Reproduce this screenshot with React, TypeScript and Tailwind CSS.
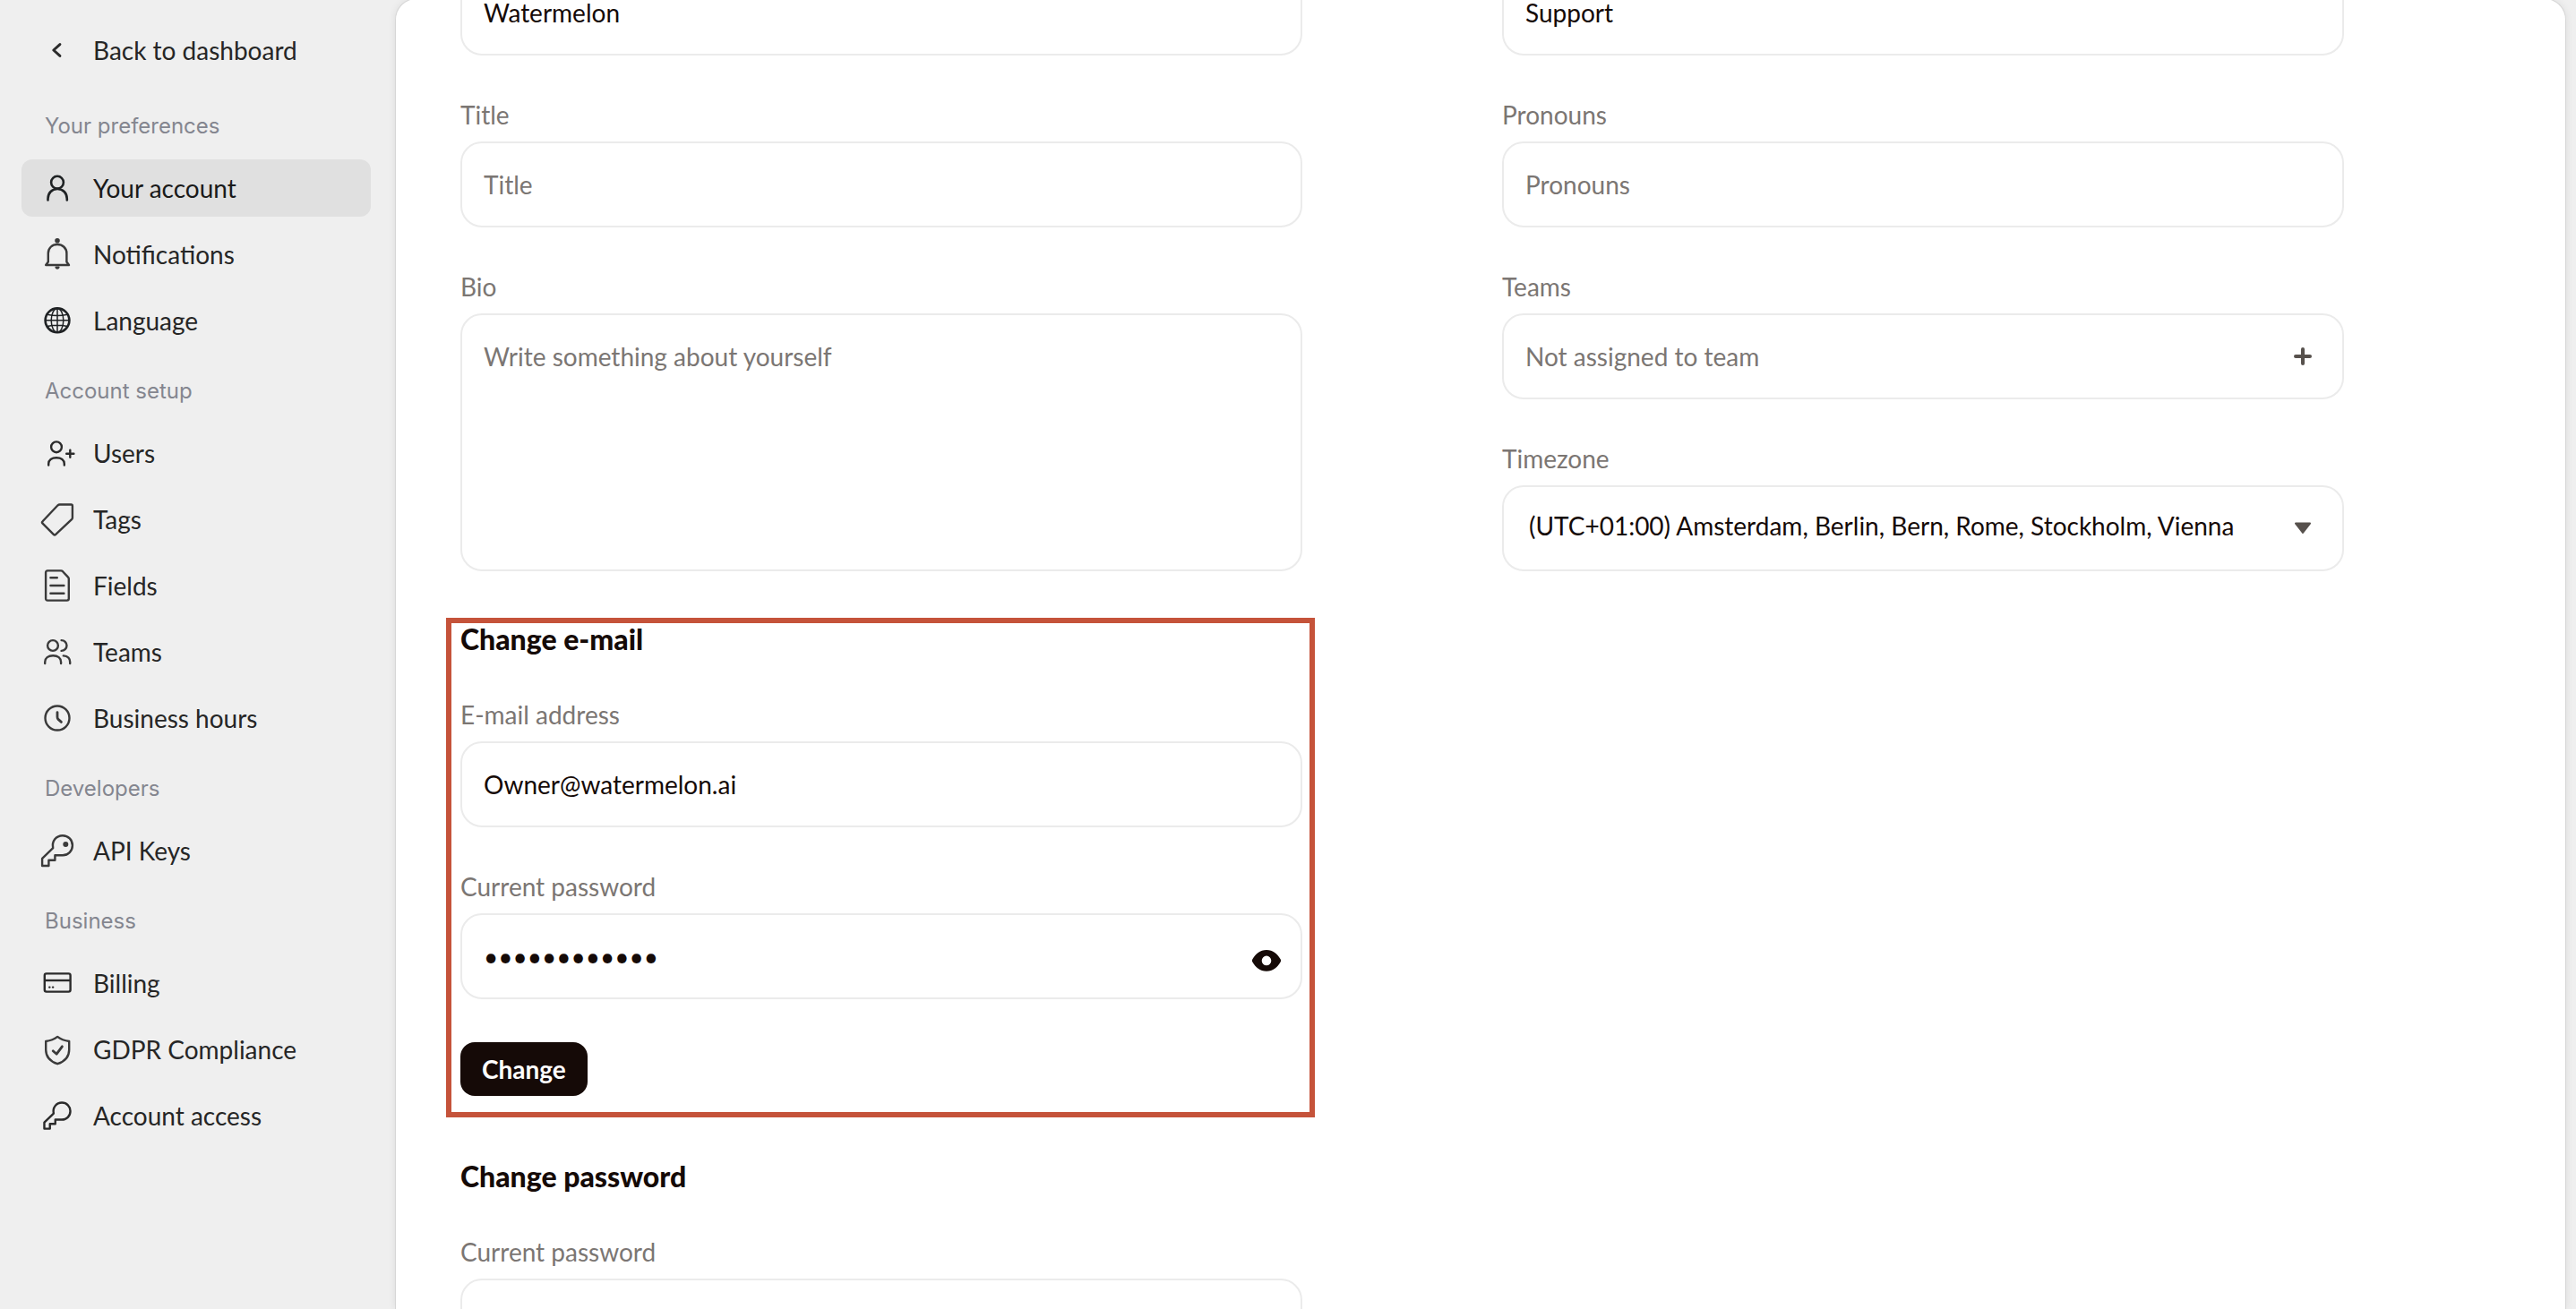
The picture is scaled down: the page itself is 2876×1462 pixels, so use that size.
import React, { useState } from 'react';

interface NavItem {
  label: string;
  icon: React.ReactNode;
  active?: boolean;
}

interface NavSection {
  title: string;
  items: NavItem[];
}

interface IconProps {
  children: React.ReactNode;
  width?: number;
  color?: string;
}

const Icon: React.FC<IconProps> = ({ children, width = 2.4, color = '#2b2b2b' }) => (
  <svg
    className="h-10 w-10 shrink-0"
    viewBox="0 0 40 40"
    fill="none"
    stroke={color}
    strokeWidth={width}
    strokeLinecap="round"
    strokeLinejoin="round"
    aria-hidden="true"
  >
    {children}
  </svg>
);

const keyPath =
  'M15.2 17.2C13.6 9.6 18.6 3.2 26 3.2C32.2 3.2 36.9 8.2 36.9 14.2C36.9 20.4 32 25.3 26 25.3H17.4V30.8H10.4V37H3.1V28.8L15.2 17.2Z';

const sections: NavSection[] = [
  {
    title: 'Your preferences',
    items: [
      {
        label: 'Your account',
        active: true,
        icon: (
          <Icon width={2.6} color="#1f2224">
            <circle cx="20" cy="13.7" r="6.9" />
            <path d="M9.5 33.4V32C9.5 26 13.6 21 20.1 21S30.8 26 30.8 32V33.4" />
          </Icon>
        ),
      },
      {
        label: 'Notifications',
        icon: (
          <Icon color="#3a3a3a">
            <circle cx="20" cy="4.8" r="1.6" fill="#3a3a3a" />
            <path d="M7.2 32L9.8 28.5V19C9.8 13 14.2 9 20 9S30.4 13 30.4 19V28.5L33 32Z" />
            <path d="M18.6 34.6A1.5 1.5 0 0 0 21.4 34.6Z" fill="#3a3a3a" />
          </Icon>
        ),
      },
      {
        label: 'Language',
        icon: (
          <Icon width={1.5} color="#1f2224">
            <circle cx="20" cy="19.8" r="13.4" strokeWidth="2.6" />
            <ellipse cx="20" cy="19.8" rx="6.8" ry="13.4" />
            <path d="M20 6.4V33.2M6.6 19.8H33.4M8.6 13.2C15 14.6 25 14.6 31.4 13.2M8.6 26.4C15 25 25 25 31.4 26.4" />
          </Icon>
        ),
      },
    ],
  },
  {
    title: 'Account setup',
    items: [
      {
        label: 'Users',
        icon: (
          <Icon>
            <circle cx="19" cy="13.3" r="5.9" />
            <path d="M10.2 33.6V32C10.2 27.8 13.8 25.2 19 25.2S27.8 27.8 27.8 32V33.6" />
            <path d="M34.3 16.6V24.8M30.2 20.7H38.4" />
          </Icon>
        ),
      },
      {
        label: 'Tags',
        icon: (
          <Icon width={2.4} color="#3a3a3a">
            <path d="M22.6 3.5H35.4C36.3 3.5 36.9 4.1 36.9 5V18.2C36.9 19 36.6 19.6 36 20.2L18.2 36.9C17.4 37.7 16.6 37.7 15.8 36.9L3.6 24.7C2.8 23.9 2.8 23.1 3.6 22.3L20.6 4.3C21.2 3.7 21.8 3.5 22.6 3.5Z" />
          </Icon>
        ),
      },
      {
        label: 'Fields',
        icon: (
          <Icon width={2.4} color="#3a3a3a">
            <path d="M9 3.4H24.2C25 3.4 25.4 3.6 26 4.2L32 10.6C32.6 11.2 32.8 11.7 32.8 12.4V34.6C32.8 35.8 32 36.6 30.8 36.6H9C7.8 36.6 7.1 35.8 7.1 34.6V5.4C7.1 4.2 7.8 3.4 9 3.4Z" />
            <path d="M12.4 11.3H19.8M12.4 20H27.4M12.4 28.7H27.4" />
          </Icon>
        ),
      },
      {
        label: 'Teams',
        icon: (
          <Icon color="#3a3a3a">
            <circle cx="15" cy="13" r="5.9" />
            <path d="M24.6 7.1A5.9 5.9 0 0 1 24.6 18.9" />
            <path d="M6.2 33V31.4C6.2 27 9.8 24.2 15.2 24.2S24.1 27 24.1 31.4V33" />
            <path d="M26.8 24.4C31.4 24.8 34.2 27.6 34.2 31.6V33" />
          </Icon>
        ),
      },
      {
        label: 'Business hours',
        icon: (
          <Icon color="#3a3a3a">
            <circle cx="20" cy="20" r="13.5" />
            <path d="M20 13.6V18.8C20 20.2 20.3 20.7 21 21.4L24.4 24.4" strokeWidth="2.8" />
          </Icon>
        ),
      },
    ],
  },
  {
    title: 'Developers',
    items: [
      {
        label: 'API Keys',
        icon: (
          <Icon width={2.4} color="#3a3a3a">
            <path d={keyPath} />
            <circle cx="29.3" cy="13" r="3" fill="#3a3a3a" stroke="none" />
          </Icon>
        ),
      },
    ],
  },
  {
    title: 'Business',
    items: [
      {
        label: 'Billing',
        icon: (
          <Icon width={2.4}>
            <rect x="5.8" y="9.4" width="28.8" height="20.2" rx="2" />
            <path d="M5.8 17H34.6" strokeLinecap="butt" />
            <circle cx="11.3" cy="24.6" r="1.2" fill="#2b2b2b" stroke="none" />
            <circle cx="15.1" cy="24.6" r="1.2" fill="#2b2b2b" stroke="none" />
          </Icon>
        ),
      },
      {
        label: 'GDPR Compliance',
        icon: (
          <Icon color="#3a3a3a">
            <path d="M20.2 5.9C23.6 8.5 28 10.3 33.2 11V20.4C33.2 28 28.4 33.4 20.2 36.2C12 33.4 7.2 28 7.2 20.4V11C12.4 10.3 16.8 8.5 20.2 5.9Z" />
            <path d="M15.2 21.8L19.2 25.2L25.4 16.8" strokeWidth="2.8" />
          </Icon>
        ),
      },
      {
        label: 'Account access',
        icon: (
          <Icon width={2.8}>
            <path d={keyPath} transform="translate(2.8 2.8) scale(0.86)" />
          </Icon>
        ),
      },
    ],
  },
];

const boxClass =
  'w-full rounded-3xl border-2 border-[#ebebeb] bg-white px-6 text-[28px] text-[#150a07] placeholder:text-[#7b7673] placeholder:opacity-100 outline-none';

interface FieldProps {
  id: string;
  label: string;
  children: React.ReactNode;
}

const Field: React.FC<FieldProps> = ({ id, label, children }) => (
  <div className="flex flex-col gap-3.5">
    <label htmlFor={id} className="text-[28px] leading-8 text-[#7b7673]">
      {label}
    </label>
    {children}
  </div>
);

const Heading: React.FC<{ children: React.ReactNode }> = ({ children }) => (
  <h3 className="font-['Lato_Black','Lato_Heavy',Lato,sans-serif] text-[32px] leading-9 font-black text-[#150a07]">
    {children}
  </h3>
);

const Sidebar: React.FC = () => (
  <nav className="flex w-[441px] shrink-0 flex-col gap-2.5 px-6 pt-6 text-[28px] leading-8 text-[#262626]">
    <a href="#dashboard" className="mb-1.5 flex h-16 items-center gap-5 px-5">
      <Icon width={3}>
        <path d="M22.9 13.6L15.8 20L22.9 26.4" />
      </Icon>
      Back to dashboard
    </a>
    {sections.map((section) => (
      <React.Fragment key={section.title}>
        <h2 className="flex h-16 items-center px-[26px] pt-2.5 font-[Inter,sans-serif] text-2xl text-[#84868f]">
          {section.title}
        </h2>
        {section.items.map((item) => (
          <a
            key={item.label}
            href="#settings"
            className={`mr-[3px] flex h-16 items-center gap-5 rounded-xl px-5 ${item.active ? 'bg-[#e0e0e0] text-[#1a1a1a]' : ''}`}
          >
            {item.icon}
            {item.label}
          </a>
        ))}
      </React.Fragment>
    ))}
  </nav>
);

const App: React.FC = () => {
  const [showPassword, setShowPassword] = useState(false);

  return (
    <div className="flex h-screen overflow-hidden bg-[#efefef] font-[Lato,sans-serif]">
      <Sidebar />

      <main className="-mt-0.5 mr-[11px] flex-1 overflow-hidden rounded-t-3xl border border-b-0 border-[#d6d6d6] bg-white shadow-[0_0_8px_rgba(0,0,0,0.08)]">
        <div className="-mt-[33px] grid grid-cols-2 items-start pr-6 pl-[72px]">
          {/* Left column */}
          <div className="w-full max-w-[940px]">
            <div className="flex flex-col gap-[50px]">
              <input aria-label="First name" className={`${boxClass} h-24`} defaultValue="Watermelon" />
              <Field id="title" label="Title">
                <input id="title" className={`${boxClass} h-24`} placeholder="Title" />
              </Field>
              <Field id="bio" label="Bio">
                <textarea
                  id="bio"
                  className={`${boxClass} h-72 resize-none py-[30px] leading-8`}
                  placeholder="Write something about yourself"
                />
              </Field>
            </div>

            <section className="-mr-3.5 -ml-4 mt-[52px] border-6 border-[#c5533a] pr-2 pb-[18px] pl-2.5">
              <div className="flex flex-col gap-[50px]">
                <Heading>Change e-mail</Heading>
                <Field id="email" label="E-mail address">
                  <input id="email" type="email" className={`${boxClass} h-24`} defaultValue="Owner@watermelon.ai" />
                </Field>
                <Field id="email-password" label="Current password">
                  <div className={`${boxClass} flex h-24 items-center`}>
                    <input
                      id="email-password"
                      type={showPassword ? 'text' : 'password'}
                      className="h-full min-w-0 flex-1 outline-none"
                      defaultValue="watermelon12"
                    />
                    <button
                      type="button"
                      aria-label="Show password"
                      className="-mr-1.5 pt-2.5"
                      onClick={() => setShowPassword(!showPassword)}
                    >
                      <svg className="h-10 w-10" viewBox="0 0 40 40" fill="#150a07">
                        <path
                          fillRule="evenodd"
                          d="M20 8C27.2 8 32.4 12.6 35.6 18.2C36.2 19.3 36.2 20.5 35.6 21.6C32.4 27.2 27.2 31.8 20 31.8S7.6 27.2 4.4 21.6C3.8 20.5 3.8 19.3 4.4 18.2C7.6 12.6 12.8 8 20 8ZM20 14.6A5.3 5.3 0 1 0 20 25.2A5.3 5.3 0 1 0 20 14.6Z"
                        />
                      </svg>
                    </button>
                  </div>
                </Field>
              </div>
              <button
                type="button"
                className="mt-12 block h-[60px] rounded-2xl bg-[#150a07] px-6 text-[28px] leading-8 font-bold text-white"
              >
                Change
              </button>
            </section>

            <section className="mt-12 flex flex-col gap-[50px]">
              <Heading>Change password</Heading>
              <Field id="current-password" label="Current password">
                <input id="current-password" type="password" className={`${boxClass} h-24`} />
              </Field>
            </section>
          </div>

          {/* Right column */}
          <div className="flex w-full max-w-[940px] flex-col gap-[50px]">
            <input aria-label="Last name" className={`${boxClass} h-24`} defaultValue="Support" />
            <Field id="pronouns" label="Pronouns">
              <input id="pronouns" className={`${boxClass} h-24`} placeholder="Pronouns" />
            </Field>
            <Field id="teams" label="Teams">
              <button id="teams" type="button" className={`${boxClass} flex h-24 items-center justify-between`}>
                <span className="text-[#7b7673]">Not assigned to team</span>
                <svg className="h-10 w-10" viewBox="0 0 40 40" stroke="#57514d" strokeWidth="4" strokeLinecap="round">
                  <path d="M20 12V28M12 20H28" />
                </svg>
              </button>
            </Field>
            <Field id="timezone" label="Timezone">
              <div className="relative">
                <select id="timezone" className={`${boxClass} block h-24 appearance-none pb-1.5 pl-7`}>
                  <option>(UTC+01:00) Amsterdam, Berlin, Bern, Rome, Stockholm, Vienna</option>
                </select>
                <svg
                  className="pointer-events-none absolute top-7 right-[26px] h-10 w-10"
                  viewBox="0 0 40 40"
                  fill="#57514d"
                  stroke="#57514d"
                  strokeWidth="2"
                  strokeLinejoin="round"
                >
                  <path d="M12 14.6H28L20 25Z" />
                </svg>
              </div>
            </Field>
          </div>
        </div>
      </main>
    </div>
  );
};

export default App;
